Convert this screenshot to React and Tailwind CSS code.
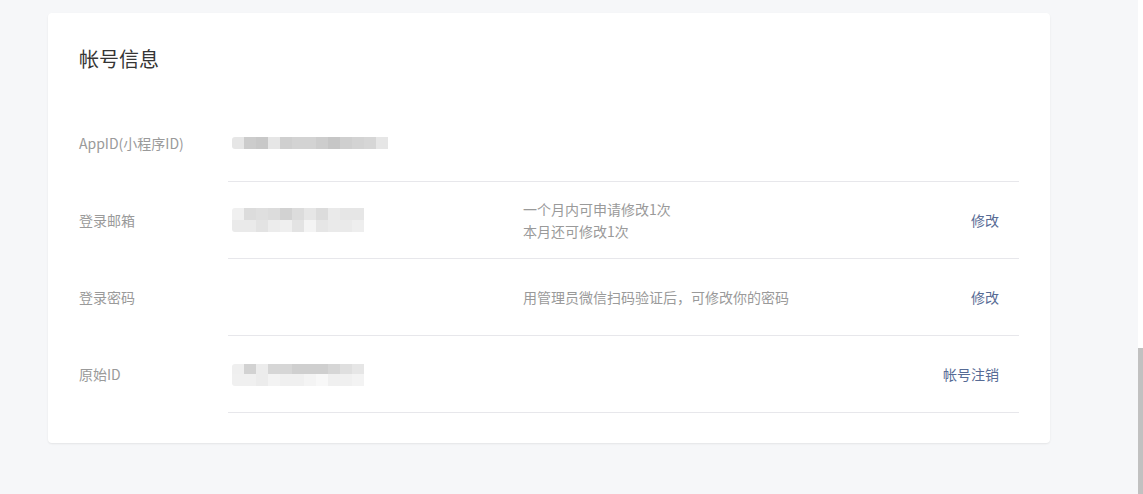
import React from "react";

const appIdCells = ["#e6e6e6","#cccccc","#c8c8c8","#e6e6e6","#cfcfcf","#d3d3d3","#d3d3d3","#cdcdcd","#c6c6c6","#cfcfcf","#d3d3d3","#d6d6d6","#e6e6e6"];
const emailRows = [
  ["#f0f0f0","#dcdcdc","#dfdfdf","#dcdcdc","#d2d2d2","#dcdcdc","#e6e6e6","#dcdcdc","#eaeaea","#e6e6e6","#e6e6e6"],
  ["#eaeaea","#eaeaea","#e3e3e3","#ececec","#efefef","#e3e3e3","#f4f4f4","#e6e6e6","#eaeaea","#eaeaea","#eeeeee"],
];
const origRows = [
  ["#efefef","#d2d2d2","#ececec","#d6d6d6","#d6d6d6","#cfcfcf","#cfcfcf","#cfcfcf","#d6d6d6","#dfdfdf","#e6e6e6"],
  ["#f0f0f0","#f0f0f0","#ececec","#f3f3f3","#f0f0f0","#f0f0f0","#f4f4f4","#f8f8f8","#f0f0f0","#f0f0f0","#f3f3f3"],
];

function Pixels({ rows, h }) {
  return (
    <div className="flex flex-col overflow-hidden rounded-l-[3px]">
      {rows.map((r, i) => (
        <div key={i} className="flex">
          {r.map((c, j) => (
            <div key={j} className="w-[12px]" style={{ background: c, height: h[i] }} />
          ))}
        </div>
      ))}
    </div>
  );
}

function Row({ label, value, desc, action }) {
  return (
    <div className="flex">
      <div className="w-[149px] shrink-0 flex items-center h-[77px] text-[#9a9a9a]">{label}</div>
      <div className="flex-1 flex items-center h-[77px] border-b border-[#e7e7eb]">
        <div className="w-[295px] pl-[4px] shrink-0">{value}</div>
        <div className="flex-1 text-[#9a9a9a] leading-[22px]">{desc}</div>
        <div className="pr-[20px] text-[#576b95]">{action}</div>
      </div>
    </div>
  );
}

export default function App() {
  return (
    <div
      className="flex h-[494px] w-[1143px] text-[14px]"
      style={{ fontFamily: '"Noto Sans CJK SC", "Noto Sans", sans-serif' }}
    >
      <div className="flex-1 bg-[#f6f7f9] pl-[48px] pt-[13px]">
        <div className="w-[1002px] h-[430px] bg-white rounded-[4px] shadow-[0_1px_2px_rgba(0,0,0,0.08)] pl-[31px] pr-[31px] pt-[32px]">
          <div className="text-[20px] leading-[28px] text-[#353535] mb-[32px]">帐号信息</div>
          <Row
            label="AppID(小程序ID)"
            value={<Pixels rows={[appIdCells]} h={[12]} />}
          />
          <Row
            label="登录邮箱"
            value={<Pixels rows={emailRows} h={[12, 12]} />}
            desc={<><div>一个月内可申请修改1次</div><div>本月还可修改1次</div></>}
            action="修改"
          />
          <Row label="登录密码" desc="用管理员微信扫码验证后，可修改你的密码" action="修改" />
          <Row
            label="原始ID"
            value={<div className="pt-[2px]"><Pixels rows={origRows} h={[10, 12]} /></div>}
            action="帐号注销"
          />
        </div>
      </div>
      <div className="w-[5px] bg-white flex flex-col justify-end">
        <div className="h-[146px] bg-[#c1c1c1]" />
      </div>
    </div>
  );
}
